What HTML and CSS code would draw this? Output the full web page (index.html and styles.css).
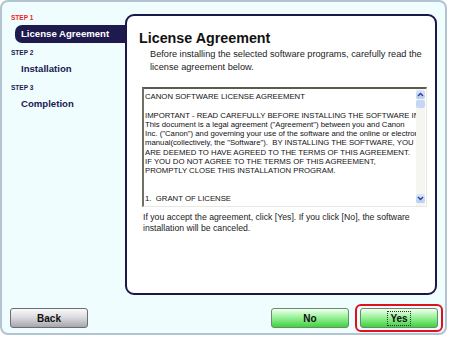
FILE: index.html
```html
<!DOCTYPE html>
<html lang="en">
<head>
  <meta charset="UTF-8">
  <title>License Agreement</title>
  <link rel="stylesheet" href="styles.css">
</head>
<body>

<div class="window">
  <div class="main">
    <div class="steps">
      <div class="step-label current">STEP 1</div>
      <div class="step-name active">License Agreement</div>
      <div class="step-label">STEP 2</div>
      <div class="step-name">Installation</div>
      <div class="step-label">STEP 3</div>
      <div class="step-name">Completion</div>
    </div>

    <div class="panel">
      <h1>License Agreement</h1>
      <p class="intro">Before installing the selected software programs, carefully read the license agreement below.</p>

      <div class="license">
        <div class="license-text">CANON SOFTWARE LICENSE AGREEMENT

IMPORTANT - READ CAREFULLY BEFORE INSTALLING THE SOFTWARE INCLUDED
This document is a legal agreement ("Agreement") between you and Canon
Inc. ("Canon") and governing your use of the software and the online or electronic
manual(collectively, the "Software").  BY INSTALLING THE SOFTWARE, YOU
ARE DEEMED TO HAVE AGREED TO THE TERMS OF THIS AGREEMENT.
IF YOU DO NOT AGREE TO THE TERMS OF THIS AGREEMENT,
PROMPTLY CLOSE THIS INSTALLATION PROGRAM.


1.  GRANT OF LICENSE
Canon grants you a personal, non-exclusive license to use the Software</div>
        <div class="scrollbar">
          <span class="arrow up"><svg width="7" height="5" viewBox="0 0 7 5"><path d="M1 4 L3.5 1.5 L6 4" fill="none" stroke="#2a3f8a" stroke-width="1.4"/></svg></span>
          <span class="thumb"></span>
          <span class="track"></span>
          <span class="arrow down"><svg width="7" height="5" viewBox="0 0 7 5"><path d="M1 1 L3.5 3.5 L6 1" fill="none" stroke="#2a3f8a" stroke-width="1.4"/></svg></span>
        </div>
      </div>

      <p class="note">If you accept the agreement, click [Yes]. If you click [No], the software installation will be canceled.</p>
    </div>
  </div>

  <div class="footer">
    <button class="btn gray">Back</button>
    <div class="right">
      <button class="btn green">No</button>
      <span class="highlight"><button class="btn green"><span class="focus">Yes</span></button></span>
    </div>
  </div>
</div>

</body>
</html>
```

FILE: styles.css
```css
body {
  margin: 0;
  background: #fff;
  font-family: "Liberation Sans", Arial, sans-serif;
}
.window {
  box-sizing: border-box;
  width: 447px; height: 335px;
  border: 2px solid #b3c3d1;
  border-radius: 8px;
  background: #effdff;
  display: flex; flex-direction: column;
}
.main {
  display: flex;
  padding-top: 12px;
}
.steps {
  width: 123px;
}
.step-label {
  font-size: 6.5px; font-weight: bold;
  color: #1c1850;
  margin-left: 9px;
  line-height: 8px;
}
.step-label.current { color: #ee1c24; }
.step-name {
  font-size: 9.6px; font-weight: bold;
  color: #1c1850;
  margin-left: 13px;
  padding-left: 6px;
  height: 18px; line-height: 18px;
  margin-top: 3px; margin-bottom: 6px;
}
.step-name.active {
  background: #1e1a4e;
  color: #fff;
  border-radius: 7px 0 0 7px;
}
.panel {
  box-sizing: border-box;
  width: 312px; height: 281px;
  background: #fff;
  border: 2px solid #1c1748;
  border-radius: 9px;
  padding: 13px 8px 0 12px;
}
h1 {
  margin: 0;
  font-size: 14.3px; line-height: 18px;
  color: #111;
}
.intro {
  margin: 1px 0 0 11px;
  font-size: 9.2px; line-height: 13px;
  color: #222;
}
.license {
  display: flex;
  margin-top: 13px;
  margin-left: 3px;
  width: 285px; height: 120px;
  box-sizing: border-box;
  border-top: 2px solid #5a5a4e;
  border-left: 2px solid #707064;
  border-right: 1px solid #e8e8e0;
  border-bottom: 1px solid #e8e8e0;
  background: #fff;
  overflow: hidden;
}
.license-text {
  flex: 1;
  overflow: hidden;
  white-space: pre;
  font-size: 7.75px; line-height: 9.3px;
  color: #111;
  padding: 3px 0 0 1px;
}
.scrollbar {
  width: 9px;
  display: flex; flex-direction: column;
  background: #f6f6f0;
  margin-right: 1px;
}
.arrow {
  height: 9px;
  background: linear-gradient(#dbe6fb, #b8cdf4);
  border-radius: 2px;
  display: flex; align-items: center; justify-content: center;
}
.arrow.up { margin-top: 1px; }
.arrow.down { margin-bottom: 3px; }
.thumb {
  height: 8px;
  background: #c6d6f6;
  border-radius: 2px;
  margin-top: 1px;
}
.track { flex: 1; }
.note {
  margin: 5px 0 0 4px;
  font-size: 8.7px; line-height: 11px;
  color: #222;
}
.footer {
  display: flex;
  justify-content: space-between;
  align-items: center;
  padding: 9px 2px 0 8px;
}
.right {
  display: flex; align-items: center;
  gap: 6px;
}
.btn {
  box-sizing: border-box;
  width: 78px; height: 20px;
  font-family: "Liberation Sans", Arial, sans-serif;
  font-size: 10px; font-weight: bold;
  color: #111;
  border: 1px solid #6c6c74;
  border-radius: 3px;
  padding: 0;
}
.btn.gray {
  background: linear-gradient(#fafafa, #dcdce0 45%, #a6a6ae);
}
.btn.green {
  background: linear-gradient(#f2fff2, #9cf29c 45%, #3fd23f);
  border-color: #6a8a6a;
}
.highlight {
  display: flex;
  border: 2px solid #e2101c;
  border-radius: 6px;
  padding: 2px 3px;
}
.focus {
  border: 1px dotted #333;
  padding: 1px 2px;
}
```
